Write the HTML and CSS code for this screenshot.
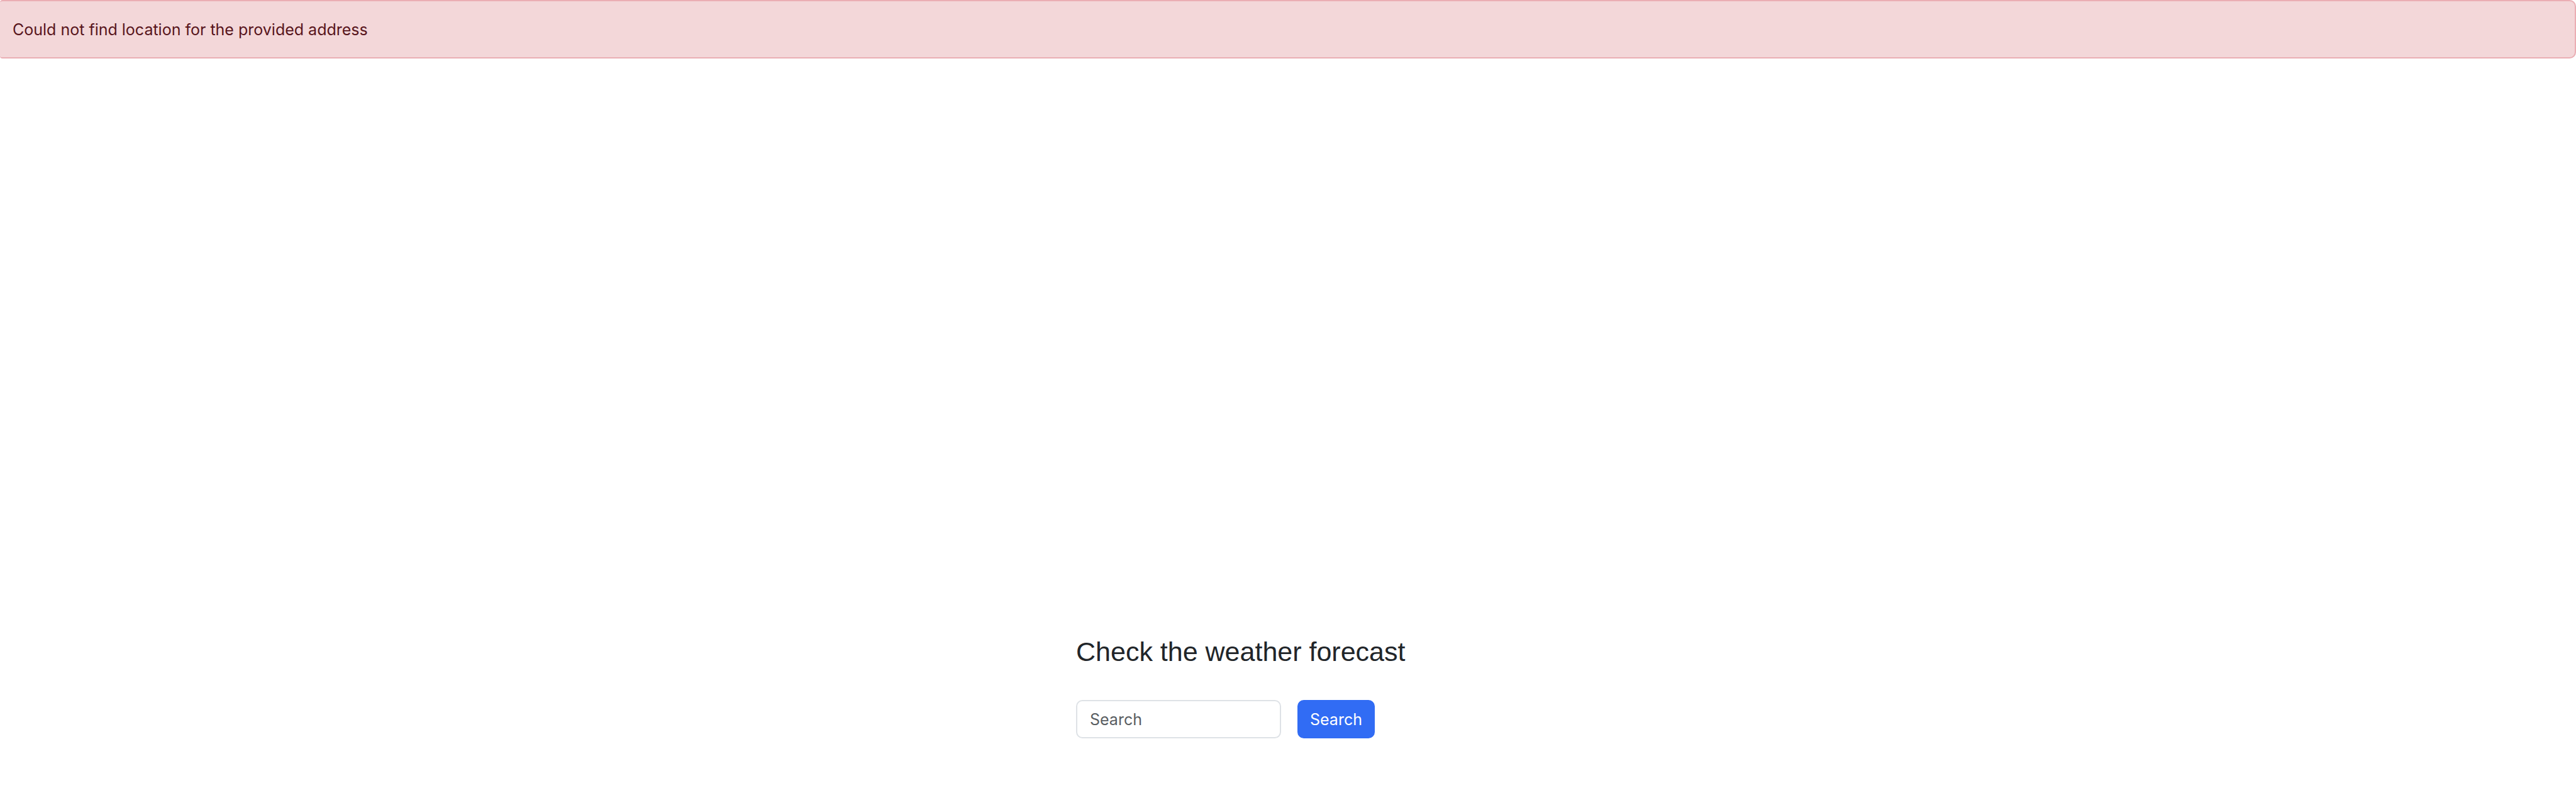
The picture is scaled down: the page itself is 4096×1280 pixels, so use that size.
FILE: index.html
```html
<!DOCTYPE html>
<html lang="en">
<head>
  <meta charset="utf-8">
  <title>Weather forecast</title>
  <link rel="stylesheet" href="styles.css">
</head>
<body>
  <div class="alert" role="alert">Could not find location for the provided address</div>
  <main class="search">
    <h1 class="search-title">Check the weather forecast</h1>
    <form class="search-form">
      <input class="search-input" type="search" placeholder="Search" aria-label="Search">
      <button class="search-button" type="submit">Search</button>
    </form>
  </main>
</body>
</html>
```

FILE: styles.css
```css
* {
  box-sizing: border-box;
}

body {
  margin: 0;
  background: #fff;
  color: #212529;
  font-family: Inter, "Liberation Sans", sans-serif;
  font-size: 25px;
  line-height: 38px;
}

.alert {
  padding: 26px 20px 25px;
  border: 2px solid #eaaeb4;
  border-left-width: 0;
  border-radius: 4px 10px 10px 4px;
  background: #f3d7d9;
  color: #58151c;
}

.search {
  max-width: 674px;
  margin: 0 auto;
  padding-top: 915px;
}

.search-title {
  margin: 0 0 49px;
  font-family: "Liberation Sans", Arial, sans-serif;
  font-size: 43px;
  font-weight: 400;
  line-height: 56px;
}

.search-form {
  display: flex;
  gap: 26px;
}

.search-input,
.search-button {
  height: 61px;
  border: 2px solid #dee2e6;
  border-radius: 10px;
  font: inherit;
}

.search-input {
  width: 326px;
  padding: 0 20px;
  background: #fff;
  color: #212529;
  appearance: none;
}

.search-input::placeholder {
  color: #5a5e62;
  opacity: 1;
}

.search-button {
  padding: 0 18px;
  border-color: #316cf4;
  background: #316cf4;
  color: #fff;
}
```
